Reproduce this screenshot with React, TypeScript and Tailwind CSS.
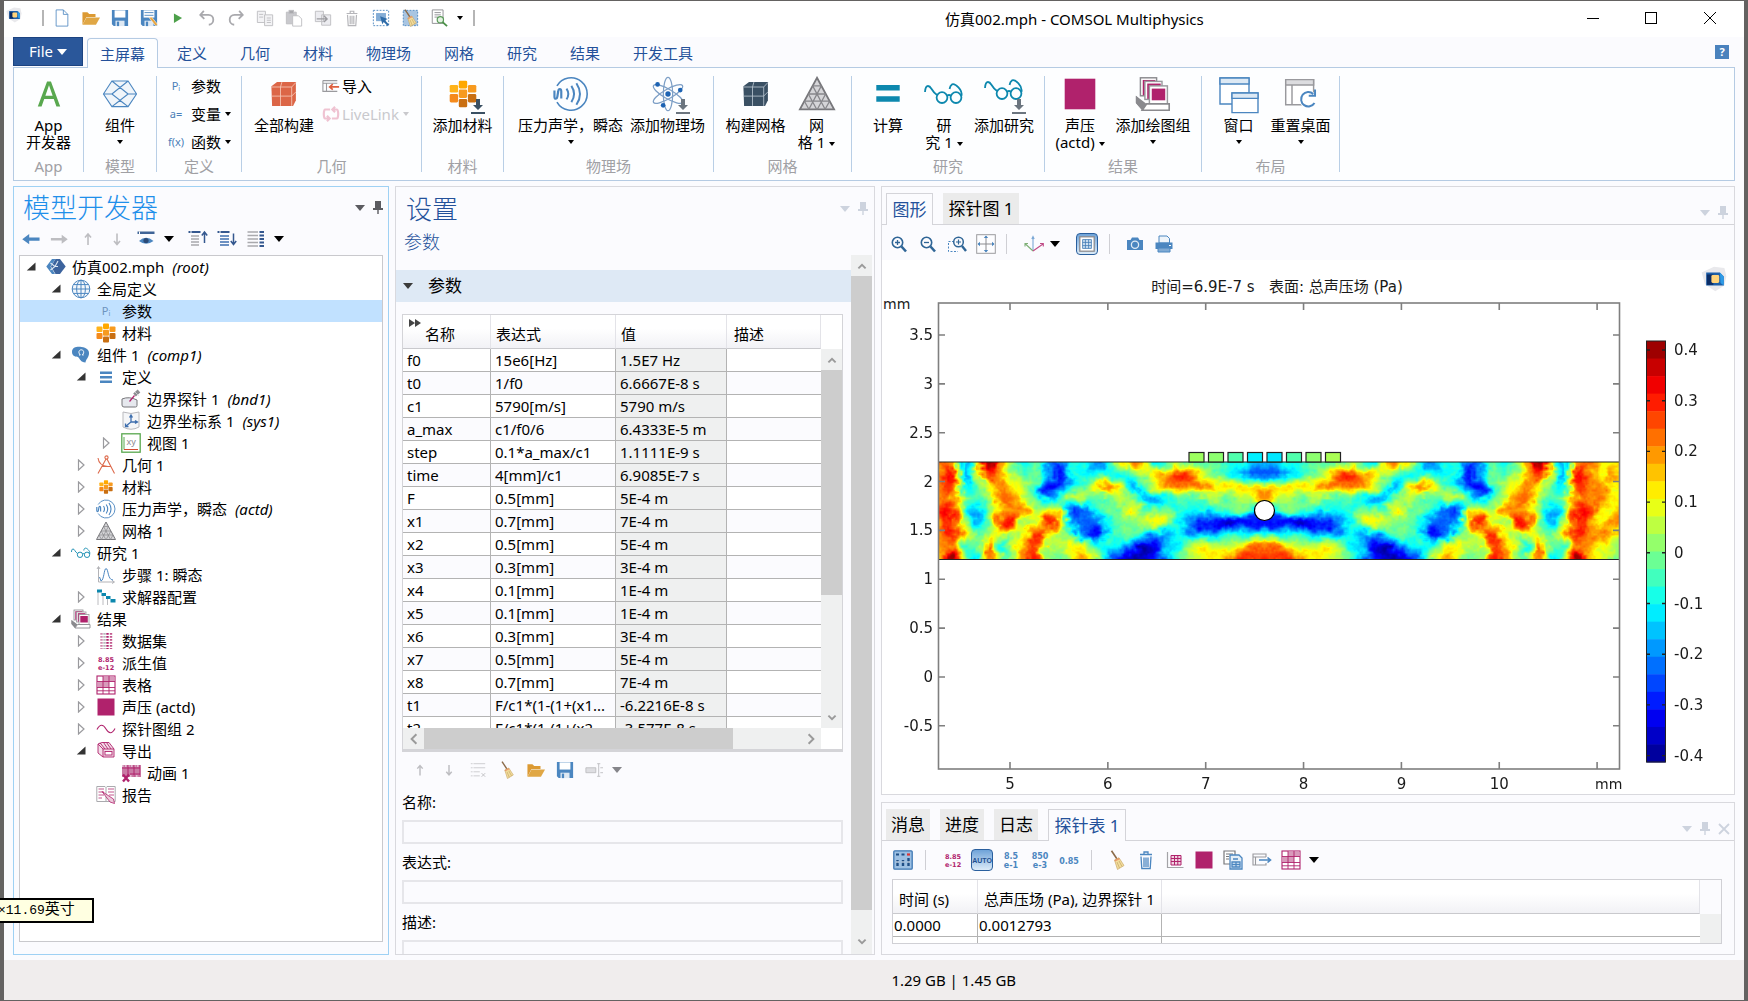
import React, { useEffect, useRef } from 'react';

const BLUE = '#4b86c0';
const GRAY = '#bdbdc1';
const PINK = '#b0226c';
const TEAL = '#0d88ae';
const SLATE = '#3a5063';

const cube = (fill: string, line: string) => (
  <>
    <path d="M1 4.5 L5 1.5 H18.5 V14.5 L16.5 18.5 H1.5 Z" fill={fill} />
    <path d="M1 5 H15.5 V18.5 M15.5 5 L18.5 1.8 M8.5 1.5 L7.5 5 V18.5 M1 11.5 H15.5 L18.5 8.5" fill="none" stroke={line} strokeWidth="0.6" />
  </>
);

const honeycomb = (
  <>
    <rect x="7" y="0.5" width="6" height="5.5" rx="1" fill="#ffa800" />
    <rect x="0.5" y="3.5" width="6" height="5.5" rx="1" fill="#ffb31a" />
    <rect x="13.5" y="3.5" width="6" height="5.5" rx="1" fill="#f79a1f" />
    <rect x="7" y="6.8" width="6" height="6" rx="1" fill="#f79a1f" />
    <rect x="0.5" y="10" width="6" height="6" rx="1" fill="#f58a1c" />
    <rect x="13.5" y="10" width="6" height="6" rx="1" fill="#c96f12" />
    <rect x="7" y="13.5" width="6" height="6" rx="1" fill="#c96f12" />
  </>
);

const acoustics = (
  <g fill="none" stroke={BLUE} strokeWidth="0.9">
    <path d="M2.2 5.5 A9 9 0 1 1 2.2 14.5" />
    <path d="M0.8 8 v3.5 c0 1.5 1.4 1.5 1.6 0 l.5-3 c.2-1.6 1.6-1.6 1.7 0 v4" strokeWidth="1.2" />
    <path d="M7.5 7 q2 3 0 6 M10.2 5.5 q3 4.5 0 9 M13 4 q4 6 0 12" strokeWidth="1.1" />
  </g>
);

const meshTriangle = (
  <>
    <path d="M10 1 L19.5 18.5 H0.5 Z" fill="#d5d5d8" stroke="#77777b" strokeWidth="1" />
    <path d="M7.6 5.5 H12.4 M5.2 10 H14.8 M3 14 H17 M7.6 5.5 L14.5 18.5 M12.4 5.5 L5.5 18.5 M5.2 10 L9.8 18.5 M14.8 10 L10.2 18.5 M3 14 L5.5 18.5 M17 14 L14.5 18.5" fill="none" stroke="#86868a" strokeWidth="0.7" />
  </>
);

const glasses = (
  <g fill="none" stroke={TEAL} strokeWidth="0.9">
    <circle cx="9" cy="11.8" r="2.7" />
    <circle cx="16" cy="11.8" r="2.7" />
    <path d="M11.5 11 q1-1 2 0 M6.5 10.5 C3.5 8.5 3.8 6 2 6 C0.8 6 0.6 7.5 0.5 9 M18.7 11 C19.5 8 15.5 4.5 14 5.2 C13 5.8 13 6.5 12.8 7.5" />
  </g>
);

const plotStack = (
  <>
    <path d="M0.5 11 L4 14.5 V19 L0.5 15 Z" fill="#8a8a8e" />
    <rect x="3" y="1" width="9" height="10" fill="#fff" stroke="#8a8a8e" strokeWidth="0.8" />
    <rect x="4.3" y="2.2" width="7" height="8.5" fill={PINK} />
    <rect x="5.5" y="3" width="9.5" height="10" fill="#fff" stroke="#9a9a9e" strokeWidth="0.8" />
    <rect x="6.8" y="4.2" width="7.5" height="8.5" fill={PINK} />
    <rect x="8" y="5.5" width="10" height="10" fill="#fff" stroke="#9a9a9e" strokeWidth="0.8" />
    <rect x="9.3" y="7" width="7.5" height="6.5" fill={PINK} />
    <path d="M0.5 11 L6.5 15.5 L4 19 L0.5 15 Z" fill="#8a8a8e" />
    <path d="M4 19 L6.5 15.5 H19 V19 Z" fill="#fff" stroke="#8a8a8e" strokeWidth="0.9" />
  </>
);

const broom = (
  <>
    <path d="M4.5 0.8 L10 9" stroke="#8b6b4a" strokeWidth="1.6" />
    <path d="M7.5 10 L12 7.8 L17 15.5 L10.5 19.5 Z" fill="#f3dd9c" stroke="#c9a868" strokeWidth="0.7" />
    <path d="M7.5 10 L12 7.8 L12.8 9.2 L8 11.4 Z" fill="#e79a6a" />
    <path d="M10 12 L12.5 18 M12 11 L15 16.5" stroke="#b89a5a" strokeWidth="0.6" />
  </>
);

const floppy = (
  <>
    <path d="M1 1 H19 V19 H3 L1 17 Z" fill={BLUE} />
    <rect x="4" y="1.5" width="12" height="8" fill="#fff" />
    <rect x="5" y="13" width="10" height="6" fill="#dfe9f3" />
    <rect x="6.5" y="14" width="2.5" height="5" fill={BLUE} />
  </>
);

const folder = (
  <>
    <path d="M0.5 17.5 V3.5 H6 L8 5.5 H15 V9 H5 Z" fill="#dc9a33" />
    <path d="M0.5 17.5 L5 9.5 H20 L15.5 17.5 Z" fill="#e0a745" />
  </>
);

const appLogo = (
  <>
    <path d="M10 0.5 L18 1.5 L19.5 8 L18 15 L11 19.5 L3 14 L0.5 5 Z" fill="#e9e9ec" />
    <path d="M4 5 H14.5 L17.5 8 V15 H4 Z" fill="#1d5fa8" />
    <rect x="4.5" y="6.5" width="5" height="8" fill="#0a2c66" />
    <rect x="8" y="7" width="6" height="6" rx="1" fill="#ffd37a" />
    <path d="M14.5 5 L17.5 8 V15 L15 13 Z" fill="#2e9be6" />
  </>
);

const tableGrid = (
  <>
    <rect x="1" y="1" width="18" height="18" fill="#fff" stroke={PINK} strokeWidth="1.1" />
    <rect x="7" y="1.5" width="6" height="11" fill="#d89abb" />
    <rect x="1.5" y="7" width="6" height="5.5" fill="#d89abb" />
    <rect x="13" y="1.5" width="5.5" height="5" fill="#d89abb" />
    <path d="M1 6.5 H19 M1 12.5 H19 M7 1 V19 M13 1 V19 M1 15.8 H19" stroke={PINK} strokeWidth="0.9" />
  </>
);

const icons: Record<string, React.ReactNode> = {
  logo: appLogo,
  newFile: <path d="M3.5 1 H11.5 L16.5 6 V19 H3.5 Z M11.5 1 V6 H16.5" fill="#fff" stroke={BLUE} strokeWidth="0.9" />,
  folder,
  floppy,
  saveAs: (
    <>
      {floppy}
      <path d="M5 4 H15 M5 7 H15" stroke={BLUE} />
      <path d="M10 9.5 L13 9 L19.5 17 L17.5 19 Z" fill="#eaa53c" stroke="#fff" strokeWidth="0.6" />
    </>
  ),
  run: <path d="M5.5 5 L14.5 10 L5.5 15.5 Z" fill="#4da04a" />,
  undo: <path d="M6.5 2 L2.5 6.5 L7 11 M3 6.5 H11.5 C19 6.5 18.5 17 12 17.5" fill="none" stroke="#a9a9ad" strokeWidth="2" />,
  redo: <path d="M13.5 2 L17.5 6.5 L13 11 M17 6.5 H8.5 C1 6.5 1.5 17 8 17.5" fill="none" stroke="#a9a9ad" strokeWidth="2" />,
  copy: (
    <g fill="#f3f3f5" stroke={GRAY}>
      <path d="M1.5 2.5 H10.5 V15 H1.5 Z M3.5 6 H8 M3.5 9 H8" />
      <path d="M9.5 6.5 H18.5 V18.5 H9.5 Z M12 10 H16.5 M12 12.5 H16.5 M12 15 H16.5" />
    </g>
  ),
  paste: (
    <g stroke={GRAY}>
      <path d="M1.5 3.5 H12.5 V16.5 H1.5 Z" fill="#c9c9cd" />
      <rect x="4.5" y="1.5" width="5" height="3.5" fill="#a9a9ad" />
      <path d="M8.5 7.5 H15 L18.5 11 V19 H8.5 Z" fill="#fff" />
    </g>
  ),
  duplicate: (
    <>
      <path d="M1.5 2.5 H10.5 V14 H1.5 Z M8.5 6.5 H18.5 V18 H8.5 Z" fill="#ececf0" stroke={GRAY} />
      <path d="M3 11 H14 M11 7.5 L14.5 11 L11 14.5" fill="none" stroke="#9c9ca0" strokeWidth="1.6" />
    </>
  ),
  trash: (
    <path d="M4 5 H16 M8 4.5 V2.5 H12 V4.5 M5 6.5 L5.8 18.5 H14.2 L15 6.5 M8 7.5 V17 M10 7.5 V17 M12 7.5 V17" fill="none" stroke="#b5b5b9" strokeWidth="1.3" />
  ),
  select: (
    <>
      <rect x="1.5" y="1.5" width="17" height="17" fill="none" stroke={BLUE} strokeDasharray="2 1.5" />
      <rect x="4.5" y="4.5" width="11" height="9" fill="#84add6" />
      <path d="M9 8 L17.5 11 L14.5 12.5 L19 17.5 L17.5 19 L13 14.5 L11.5 17 Z" fill="#2f6ca8" />
    </>
  ),
  clearSelection: (
    <>
      <rect x="2.5" y="1.5" width="16" height="17" fill="#a8c5e2" stroke={BLUE} strokeDasharray="2 1.5" />
      {broom}
    </>
  ),
  search: (
    <>
      <path d="M2.5 1 H14.5 V16 H2.5 Z M5 4 H12 M5 6.5 H12 M5 9 H9" fill="#fff" stroke="#8b8b8f" />
      <circle cx="11.5" cy="12" r="3.5" fill="#e3f1e2" stroke="#5a9a58" strokeWidth="1.3" />
      <path d="M14 14.5 L19 19" stroke="#4a9047" strokeWidth="2" />
    </>
  ),
  appA: <path d="M2 19 L8.6 1 H11.4 L18 19 H15.3 L13.4 13.5 H6.6 L4.7 19 Z M7.4 11.3 H12.6 L10 3.8 Z" fill="#59a84f" fillRule="evenodd" />,
  gem: (
    <path d="M0.8 10 L5.5 2.8 H14.5 L19.2 10 L14.5 17 H5.5 Z M5.5 2.8 L10 6.4 M14.5 2.8 L10 6.4 M0.8 10 H5.5 M14.5 10 H19.2 M5.5 17 L10 13.6 L14.5 17 M5.5 2.8 L14.5 10 M14.5 2.8 L5.5 10 M5.5 10 L14.5 17 M14.5 10 L5.5 17" fill="#f0f5fa" stroke={BLUE} strokeWidth="0.6" />
  ),
  cubeRed: cube('#dc6647', '#f5c8b8'),
  cubeDark: cube(SLATE, '#b8c4ce'),
  importGeom: (
    <>
      <path d="M1 4 H17 M1 4 V16 H17 M1 7 H17 M5 7 V16" fill="none" stroke="#9a9a9e" strokeWidth="1.2" />
      <path d="M19 11 H9 M12 8 L8.5 11 L12 14" fill="none" stroke="#dd5f3e" strokeWidth="1.8" />
    </>
  ),
  livelink: (
    <path d="M9 5 H3.5 C1.5 5 1.5 15 3.5 15 H7 M5.5 12 L8.5 15 L5.5 18 M11 15 H16.5 C18.5 15 18.5 5 16.5 5 H13 M14.5 2 L11.5 5 L14.5 8" fill="none" stroke="#efc3d2" strokeWidth="2.4" />
  ),
  honeycomb,
  acoustics,
  atom: (
    <g fill="none" stroke="#7d9fc6" strokeWidth="0.7">
      <ellipse cx="10" cy="10" rx="2.6" ry="9.3" />
      <ellipse cx="10" cy="10" rx="2.6" ry="9.3" transform="rotate(60 10 10)" />
      <ellipse cx="10" cy="10" rx="2.6" ry="9.3" transform="rotate(-60 10 10)" />
      <g fill="#1d63b3" stroke="none">
        <circle cx="10" cy="10" r="1.5" />
        <circle cx="4.2" cy="4.7" r="1.3" />
        <circle cx="16.8" cy="7.8" r="1.3" />
        <circle cx="7.3" cy="16.3" r="1.3" />
      </g>
    </g>
  ),
  mesh: meshTriangle,
  equals: <path d="M3.5 5 H16.5 V8 H3.5 Z M3.5 11.3 H16.5 V14.3 H3.5 Z" fill={TEAL} />,
  glasses,
  pinkSquare: <rect x="1.5" y="1.5" width="17" height="17" fill={PINK} />,
  plotStack,
  windows: (
    <g fill="#fff" stroke={BLUE} strokeWidth="0.7">
      <path d="M0.5 2 H15 V15 H0.5 Z" />
      <path d="M0.5 2 H15 V5 H0.5 Z" fill="#dde9f4" />
      <path d="M6.5 9.5 H19.5 V19.3 H6.5 Z" />
      <path d="M6.5 9.5 H19.5 V12.2 H6.5 Z" fill="#dde9f4" />
    </g>
  ),
  resetDesktop: (
    <>
      <path d="M1.5 2 H17 V16 H1.5 Z" fill="#fff" stroke="#99999d" strokeWidth="0.8" />
      <path d="M1.5 2 H17 V5 H1.5 Z M5 5 V16" fill="#dcdcdf" stroke="#99999d" strokeWidth="0.8" />
      <circle cx="14" cy="13" r="5" fill="#fff" />
      <path d="M17.5 15 A4 4 0 1 1 16.8 10 M17.8 7.5 V11 H14.3" fill="none" stroke={BLUE} strokeWidth="1.1" />
    </>
  ),
  arrowLeft: <path d="M19.5 8.3 V12 H8 V15.8 L0.3 10.2 L8 4.5 V8.3 Z" fill={BLUE} />,
  arrowRight: <path d="M1 8.8 V11.6 H13 V15.2 L19.7 10.2 L13 5.2 V8.8 Z" fill={GRAY} />,
  arrowUp: <path d="M10 16 V5 M7 8.5 L10 5 L13 8.5" fill="none" stroke={GRAY} strokeWidth="1.6" />,
  arrowDown: <path d="M10 4.5 V15.5 M7 12 L10 15.5 L13 12" fill="none" stroke={GRAY} strokeWidth="1.6" />,
  eye: (
    <>
      <path d="M1.5 2.5 H18.5 V5 H1.5 Z" fill="#3f6497" />
      <path d="M3.5 2.5 V5" stroke="#fff" />
      <path d="M3 12 Q10 5.5 17.5 12 Q10 17.5 3 12 Z" fill={BLUE} />
      <circle cx="10" cy="11.5" r="2.6" fill="#2b4a76" />
    </>
  ),
  collapse: (
    <>
      <path d="M0.5 3 H12.5" stroke="#35588f" strokeWidth="2" strokeDasharray="2 1 9 0" />
      <path d="M3 7 H11 M3 10 H11 M3 13 H11 M3 16 H11" stroke="#a9a9ad" strokeWidth="1.4" />
      <path d="M16.5 14 V3.5 M13.8 6.5 L16.5 3 L19.2 6.5" fill="none" stroke="#35588f" strokeWidth="1.5" />
    </>
  ),
  expand: (
    <>
      <path d="M0.5 3 H12.5" stroke="#35588f" strokeWidth="2" strokeDasharray="2 1 9 0" />
      <path d="M3 7 H12 M3 10 H12 M3 13 H12 M3 16 H12" stroke="#3f6fae" strokeWidth="1.6" />
      <path d="M16.5 4.5 V15 M13.8 12 L16.5 15.5 L19.2 12" fill="none" stroke="#35588f" strokeWidth="1.5" />
    </>
  ),
  columns: (
    <>
      <path d="M1.5 3 H12 M1.5 6.5 H12 M1.5 10 H12 M1.5 13.5 H12 M1.5 17 H12" stroke="#a9a9ad" strokeWidth="1.5" />
      <path d="M13.5 3 H18 M13.5 6.5 H18 M13.5 10 H18 M13.5 13.5 H18 M13.5 17 H18" stroke="#35588f" strokeWidth="2" />
    </>
  ),
  root: (
    <>
      <path d="M0.3 9.5 L6 2 H9.5 L4.5 9.5 L9 17 H6 Z" fill={BLUE} />
      <path d="M9.5 2 H14 L19.7 9.5 L14 17 H9.5 L5 9.5 Z" fill="#3c639d" />
      <path d="M4.5 6 L9 9.5 L4.5 13 M9 9.5 H12 M9 9.5 L12 4" fill="none" stroke="#dce7f3" strokeWidth="1.1" />
    </>
  ),
  globe: (
    <g fill="none" stroke={BLUE} strokeWidth="1">
      <circle cx="10" cy="10" r="8.8" fill="#f4f8fc" />
      <ellipse cx="10" cy="10" rx="4.4" ry="8.8" />
      <path d="M10 1.2 V18.8 M1.2 10 H18.8 M2.5 5.6 H17.5 M2.5 14.4 H17.5" />
    </g>
  ),
  component: (
    <>
      <path d="M1 7 C1 2 6 1.5 10.5 2 C15.5 2.5 18.5 5 18 9 C17.5 13 15 14 14.5 17.5 C9.5 17.5 9 13.5 7 12 C5 11.5 1 11.5 1 7 Z" fill={BLUE} />
      <path d="M8 10 H9.3 C6.8 7.5 8 4.8 10.3 4.8 C12.6 4.8 13.8 7.5 11.3 10 H12.6" fill="none" stroke="#fff" />
    </>
  ),
  definitions: <path d="M4 4.5 H16 V7 H4 Z M4 9 H16 V11.5 H4 Z M4 13.5 H16 V16 H4 Z" fill={BLUE} />,
  probe: (
    <>
      <path d="M1 10 Q8 7 16 11 V16.5 Q16 18 14.5 18 H3 Q1 18 1 16 Z" fill="#e6e8ee" stroke="#77777b" />
      <path d="M13.5 6 L18 2" stroke="#8d8d91" strokeWidth="4" />
      <path d="M14 3 L17.5 6.5" stroke="#c9c9cd" />
      <path d="M8.5 12.5 L13.5 6.5" stroke={PINK} strokeWidth="1.2" />
    </>
  ),
  coordSystem: (
    <>
      <path d="M2 1 Q10 4 18 1 V16 Q10 20.5 2 16 Z" fill="#f5f6f8" stroke="#b9b9bd" />
      <path d="M10 4.5 V11 L5 15 M10 11 H16 M8.5 6.5 L10 4 L11.5 6.5 M14 9.5 L16.5 11 L14 12.5 M4.5 12.5 V15.5 H7.5" fill="none" stroke="#3f6fae" strokeWidth="1.3" />
    </>
  ),
  view: (
    <>
      <rect x="0.8" y="0.8" width="18.4" height="18.4" fill="#fff" stroke="#59a84f" strokeWidth="1.3" />
      <path d="M3 4 V16.5" stroke="#59a84f" />
      <path d="M3 16.5 H17" stroke="#d3482f" />
      <text x="5.5" y="11.5" fontSize="9" fontFamily="Noto Sans" fill="#8b8b8f">xy</text>
    </>
  ),
  geometry: (
    <g fill="none" stroke="#dd6a4c" strokeWidth="1.1">
      <path d="M2 3 Q3 11 12 11.5 M10 4 L2 18.5 M11 4 L18.5 18.5 M5.5 11.5 H14.5" />
      <circle cx="10.5" cy="2.5" r="1.6" />
    </g>
  ),
  honeycombSmall: <g transform="translate(3 3) scale(0.7)">{honeycomb}</g>,
  step: (
    <>
      <path d="M2.5 2 V17 H18 M1 4 L2.5 1.5 L4 4 M16 15.5 L18.5 17 L16 18.5" fill="none" stroke="#b3b3b7" />
      <path d="M3.5 12 L5 16 C8 15.5 8 3.5 10 3.5 C12.5 3.5 11.5 15 17 15" fill="none" stroke={BLUE} />
    </>
  ),
  solver: (
    <>
      <path d="M2 5 V18 M7 8.5 V18 M11.5 12 V18" stroke="#bcbcc0" />
      <path d="M1 2.5 H6 V5.5 H1 Z M5.5 6 H10 V9 H5.5 Z M10 9 H14.5 V12 H10 Z M14.5 12 H19.5 V15.5 H14.5 Z" fill={TEAL} />
    </>
  ),
  datasets: (
    <g fill="none" strokeWidth="2.4" strokeDasharray="1.8 1.2">
      <path d="M5.5 2 V18" stroke="#d089ae" />
      <path d="M8.5 2 V18" stroke="#b9b9bd" />
      <path d="M11.5 2 V18" stroke={PINK} />
      <path d="M15 2 V18" stroke="#c2588e" />
    </g>
  ),
  derived: (
    <g fill={PINK} fontFamily="DejaVu Sans" fontWeight="bold" fontSize="6.5">
      <text x="2" y="9">8.85</text>
      <text x="2" y="16.5">e-12</text>
    </g>
  ),
  table: tableGrid,
  wave: <path d="M1 10.5 C4 5 7 5 10 10 C13 15 16 15 19 9.5" fill="none" stroke={PINK} strokeWidth="1.1" />,
  exportIcon: (
    <g fill="#f3dce8" stroke={PINK} strokeWidth="0.9">
      <path d="M2 3 L6 1.5 H13 L18 8 V16 H7 L2 12 Z" />
      <path d="M2 3 L7 8 H18 M4 1.8 L9 8 M7.5 1.5 L12 8 M10.5 1.5 L15 8 M7 8 V16" fill="none" />
      <rect x="9" y="10.5" width="7" height="3.5" fill="#fff" />
    </g>
  ),
  animation: (
    <>
      <path d="M1 2 H19.5 V14 H1 Z" fill="#c97ba5" />
      <path d="M1 3 H19.5 M9 13 H19.5" stroke="#fff" strokeDasharray="1.5 1.5" />
      <path d="M7 2 V14 M13 2 V14 M19 2 V14 M1 5 H19 M9 11 H19" stroke={PINK} />
      <path d="M2 11.5 L8 18.5 M8 11.5 L2 18.5" stroke={PINK} strokeWidth="2.4" />
    </>
  ),
  report: (
    <>
      <path d="M0.8 1.5 H9 L10 2.5 L11 1.5 H19.2 V16.5 H0.8 Z M10 2.5 V16.5" fill="#fff" stroke="#aaaaae" />
      <path d="M2.5 4 H8 M2.5 7 H8 M2.5 10 H8 M2.5 13 H6 M12 4 H18 M12 7 H18 M13 10 H18" stroke="#c2588e" />
      <path d="M6 6.5 L14 17 L18.5 18.5 L17.5 14 Z" fill="#eccadb" stroke={PINK} strokeWidth="0.8" />
    </>
  ),
  deleteRow: (
    <>
      <path d="M2 3 H18 M2 7.5 H18 M2 12 H12 M2 16.5 H12" stroke="#c9c9cd" strokeDasharray="2 1 14 0" />
      <path d="M14 13.5 L18 17.5 M18 13.5 L14 17.5" stroke={GRAY} />
    </>
  ),
  broom,
  rename: (
    <>
      <path d="M1 7.5 H12 V13 H1 Z" fill="#dedee2" stroke={GRAY} />
      <path d="M13.5 3 H17 M15.2 3 V17 M13.5 17 H17 M17 7.5 H20 M17 13 H20" stroke={GRAY} fill="none" />
    </>
  ),
  zoomIn: (
    <g fill="none" stroke="#2f6596">
      <circle cx="8.5" cy="8.5" r="5.2" strokeWidth="1.6" />
      <path d="M12.5 12.5 L17 17.5" strokeWidth="2.6" />
      <path d="M6 8.5 H11 M8.5 6 V11" strokeWidth="1.3" />
    </g>
  ),
  zoomOut: (
    <g fill="none" stroke="#2f6596">
      <circle cx="8.5" cy="8.5" r="5.2" strokeWidth="1.6" />
      <path d="M12.5 12.5 L17 17.5" strokeWidth="2.6" />
      <path d="M6 8.5 H11" strokeWidth="1.3" />
    </g>
  ),
  zoomBox: (
    <g fill="none" stroke="#2f6596">
      <path d="M7 7.5 H1.5 V17.5 H11" stroke={BLUE} strokeDasharray="2 1.5" />
      <circle cx="11.5" cy="8" r="4.8" strokeWidth="1.5" />
      <path d="M15 12 L19 17" strokeWidth="2.4" />
      <path d="M9 8 H14 M11.5 5.5 V10.5" strokeWidth="1.2" />
    </g>
  ),
  zoomExtents: (
    <>
      <rect x="0.7" y="0.7" width="18.6" height="18.6" fill="#fdfdff" stroke="#9b9b9f" />
      <path d="M10 2 V18 M2 10 H18" stroke="#8b8b8f" />
      <path d="M10 1.5 L12.2 4 H7.8 Z M10 18.5 L12.2 16 H7.8 Z M1.5 10 L4 7.8 V12.2 Z M18.5 10 L16 7.8 V12.2 Z" fill={BLUE} />
    </>
  ),
  axes: (
    <g fill="none" strokeWidth="1.1">
      <path d="M9 17 V3 M7.8 5 L9 2.5 L10.2 5" stroke="#7da9d6" />
      <path d="M9 17 L1.5 10 M1 12.5 V9.5 H4" stroke="#7fb077" />
      <path d="M9 17 L19 10 M16 9.5 H19.3 V12.5" stroke="#c04a86" />
    </g>
  ),
  gridToggle: (
    <g transform="translate(2 2) scale(0.8)">
      <rect x="1" y="1" width="18" height="18" fill="#fff" stroke="#8b8b8f" strokeWidth="1.6" />
      <path d="M4.5 4.5 H15.5 V15.5 H4.5 Z M8 4.5 V15.5 M12 4.5 V15.5 M4.5 8 H15.5 M4.5 12 H15.5" fill="#cfe1f2" stroke="#3f78b4" />
    </g>
  ),
  camera: (
    <>
      <path d="M2 6 H5.5 L7 3.5 H13 L14.5 6 H18 V16 H2 Z" fill={BLUE} />
      <circle cx="10" cy="10.8" r="3.6" fill={BLUE} stroke="#dfeaf5" strokeWidth="1.3" />
    </>
  ),
  printer: (
    <>
      <path d="M5 2 H13 L15.5 4.5 V9 H5 Z" fill="#eef4fa" stroke={BLUE} />
      <path d="M1.5 8.5 H18.5 V15 H1.5 Z" fill={BLUE} />
      <path d="M4 14 H16 V18 H4 Z" fill="#7fa9d3" stroke={BLUE} />
      <path d="M15 11.5 H17" stroke="#fff" />
    </>
  ),
  precision: (
    <>
      <rect x="0.8" y="0.8" width="18.4" height="18.4" rx="1" fill="#9dc0e3" stroke="#3f78b4" strokeWidth="1.3" />
      <path d="M4.5 10 V16 M10 10 V16 M15.5 8 V16" stroke="#1f4f86" strokeWidth="2.4" />
      <path d="M3 4.5 H6 M8.5 4.5 H11.5" stroke="#1f4f86" strokeWidth="2" />
      <path d="M14 4.5 H17" stroke="#d33" strokeWidth="2.2" />
      <path d="M3 12 H6 M8.5 12 H11.5 M14 12 H17" stroke="#fff" />
    </>
  ),
  auto: <text x="10" y="13" textAnchor="middle" fontFamily="Liberation Sans" fontWeight="bold" fontSize="7" fill="#1d4f8f">AUTO</text>,
  eng1: (
    <g fill={BLUE} fontFamily="DejaVu Sans" fontWeight="bold" fontSize="8" textAnchor="middle">
      <text x="10" y="8.5">8.5</text>
      <text x="10" y="17.5">e-1</text>
    </g>
  ),
  eng2: (
    <g fill={BLUE} fontFamily="DejaVu Sans" fontWeight="bold" fontSize="8" textAnchor="middle">
      <text x="10" y="8.5">850</text>
      <text x="10" y="17.5">e-3</text>
    </g>
  ),
  decimal: <text x="10" y="13.5" textAnchor="middle" fill={BLUE} fontFamily="DejaVu Sans" fontWeight="bold" fontSize="8">0.85</text>,
  trashBlue: (
    <path d="M4 4.5 H16 M8 4 V2 H12 V4 M5 6.5 L5.8 18.5 H14.2 L15 6.5 M8 7.5 V17 M10 7.5 V17 M12 7.5 V17" fill="none" stroke={BLUE} strokeWidth="1.3" />
  ),
  tableGraph: (
    <>
      <path d="M2.5 2 V17.5 H18.5" fill="none" stroke="#a3a3a7" strokeWidth="1.2" />
      <path d="M6 5.5 H16 V15 H6 Z M9.5 5.5 V15 M12.8 5.5 V15 M6 8.5 H16 M6 11.5 H16" fill="#f0d3e1" stroke={PINK} />
    </>
  ),
  copyTable: (
    <>
      <path d="M1 1 H12 V14 H1 Z M3 4 H10 M3 6.5 H6 M3 9 H6" fill="#fff" stroke="#77777b" strokeWidth="1.2" />
      <path d="M7 5 H16 L19 8 V19 H7 Z M10 9 H15 M9 12 H17 V17 H9 Z M13 12 V17 M9 14.5 H17" fill="#e5eff8" stroke={BLUE} strokeWidth="1.3" />
    </>
  ),
  exportTable: (
    <>
      <path d="M14 7 V4 H1 V15 H14 V13 M1 7 H14 M3.5 7 V15" fill="none" stroke="#99999d" strokeWidth="1.1" />
      <path d="M7 10 H18 M15.5 7.5 L18.5 10 L15.5 12.5" fill="none" stroke={BLUE} strokeWidth="1.6" />
    </>
  ),
};

const Icon = ({ name, className = 'h-5 w-5' }: { name: string; className?: string }) => (
  <svg viewBox="0 0 20 20" aria-hidden="true" className={`shrink-0 ${className}`}>{icons[name]}</svg>
);

const Caret = ({ className = 'border-t-black' }: { className?: string }) => (
  <span className={`inline-block h-0 w-0 shrink-0 border-x-5 border-t-6 border-x-transparent ${className}`} />
);

const SmallCaret = ({ className = 'border-t-black' }: { className?: string }) => (
  <span className={`inline-block h-0 w-0 shrink-0 border-x-3 border-t-4 border-x-transparent align-middle ${className}`} />
);

const Pin = () => (
  <svg viewBox="0 0 10 14" aria-hidden="true" className="h-3.5 w-2.5">
    <path d="M2 0 H8 V7 H10 V9 H5.7 V13 H4.3 V9 H0 V7 H2 Z" fill="currentColor" />
  </svg>
);

const Chevron = ({ dir }: { dir: 'up' | 'down' | 'left' | 'right' }) => {
  const paths = { up: 'M2 7 L5 4 L8 7', down: 'M2 3 L5 6 L8 3', left: 'M7 1 L3 5 L7 9', right: 'M3 1 L7 5 L3 9' };
  return (
    <svg viewBox="0 0 10 10" aria-hidden="true" className="h-3 w-3 shrink-0">
      <path d={paths[dir]} fill="none" stroke="#9a9a9a" strokeWidth="1.6" />
    </svg>
  );
};

/* ---------- title bar and ribbon ---------- */

const quickTools = [
  ['新建', 'newFile'], ['打开', 'folder'], ['保存', 'floppy'], ['另存为', 'saveAs'], ['运行', 'run'],
  ['撤消', 'undo'], ['重做', 'redo'], ['复制', 'copy'], ['粘贴', 'paste'], ['复制副本', 'duplicate'],
  ['删除', 'trash'], ['选择', 'select'], ['清除选择', 'clearSelection'], ['查找', 'search'],
];

const TitleBar = () => (
  <header className="flex h-9 shrink-0 items-center bg-white pb-0.5">
    <Icon name="logo" className="mb-1.5 ml-0.5 h-4 w-4" />
    <span className="mr-[3px] ml-5 h-4 w-0.5 bg-[#b5b5b5]" />
    {quickTools.map(([label, icon]) => (
      <button key={label} aria-label={label} className="flex w-[29px] shrink-0 justify-center">
        <Icon name={icon} className="h-4.5 w-4.5" />
      </button>
    ))}
    <button aria-label="更多" className="ml-1 flex"><SmallCaret /></button>
    <span className="ml-2.5 h-4 w-0.5 bg-[#b5b5b5]" />
    <h1 className="ml-[470px] pt-0.5 text-[15px] whitespace-nowrap">仿真002.mph - COMSOL Multiphysics</h1>
    <div className="mr-1 ml-auto flex">
      <button aria-label="最小化" className="flex h-8 w-[58px] items-center justify-center"><span className="h-px w-3 bg-black" /></button>
      <button aria-label="最大化" className="flex h-8 w-[58px] items-center justify-center"><span className="h-3 w-3 border border-black" /></button>
      <button aria-label="关闭" className="flex h-8 w-[60px] items-center justify-center">
        <svg viewBox="0 0 12 12" className="h-3 w-3"><path d="M0 0 L12 12 M12 0 L0 12" stroke="#000" /></svg>
      </button>
    </div>
  </header>
);

const ribbonTabs = ['定义', '几何', '材料', '物理场', '网格', '研究', '结果', '开发工具'];

const RibbonTabs = () => (
  <nav className="flex h-[30px] shrink-0 items-end px-[9px] text-[15px] text-[#24519a]">
    <button className="flex h-[29px] w-[70px] items-center justify-center gap-1 self-start border border-[#1c4380] bg-[#2a579a] text-white">
      File<Caret className="border-t-white" />
    </button>
    <button className="relative z-10 -mb-px ml-1 h-[30px] w-[71px] rounded-t border border-b-0 border-[#b5cbe3] bg-[#fdfeff] pt-0.5">主屏幕</button>
    <div className="ml-[19px] flex gap-[33px]">
      {ribbonTabs.map((t) => <button key={t} className="h-[27px]">{t}</button>)}
    </div>
    <button aria-label="帮助" className="mr-1.5 mb-2 ml-auto h-3.5 w-3.5 bg-[#4a82bd] text-[11px] leading-[14px] font-bold text-white">?</button>
  </nav>
);

const Group = ({ label, width, children }: { label: string; width: string; children: React.ReactNode }) => (
  <section className={`my-2 flex shrink-0 flex-col border-r border-[#b9cfe6] ${width}`}>
    <div className="flex h-20 justify-center">{children}</div>
    <h2 className="h-3.5 text-center leading-5 text-[#a0a0a4]">{label}</h2>
  </section>
);

type BigProps = { icon: string; width?: string; lines: string[]; caret?: 'below' | 'inline'; add?: string; size?: string };

const BigButton = ({ icon, width = 'w-full', lines, caret, add, size = 'h-8 w-8' }: BigProps) => (
  <button className={`flex shrink-0 flex-col items-center leading-[17px] whitespace-nowrap ${width}`}>
    <span className="relative mb-[5px] flex h-9 w-full items-center justify-center">
      <Icon name={icon} className={size} />
      {add && (
        <svg viewBox="0 0 14 16" className={`absolute top-[23px] left-1/2 ml-2 h-4 w-3.5 ${add}`}>
          <path d="M5 0 H9 V6 H12 L7 11 L2 6 H5 Z M0 13 H14 V15 H0 Z" fill="currentColor" />
        </svg>
      )}
    </span>
    {lines.map((l, i) => (
      <span key={l}>
        {l}
        {caret === 'inline' && i === lines.length - 1 && <> <SmallCaret /></>}
      </span>
    ))}
    {caret === 'below' && <SmallCaret className="mt-1.5 border-t-black" />}
  </button>
);

const SmallButton = ({ mark, text, caret }: { mark: string; text: string; caret?: boolean }) => (
  <button className="flex h-5 items-center">
    <span className="w-[22px] text-center text-[11px] text-[#4b7fb8]">{mark}</span>
    <span className="ml-1">{text}</span>
    {caret && <SmallCaret className="ml-1 border-t-black" />}
  </button>
);

const Ribbon = () => (
  <div className="mx-[9px] flex h-[114px] shrink-0 overflow-hidden border border-[#b5cbe3] bg-[#fdfeff]">
    <Group label="App" width="w-[70px]"><BigButton icon="appA" size="h-7 w-7" lines={['App', '开发器']} /></Group>
    <Group label="模型" width="w-[73px]"><BigButton icon="gem" size="h-9 w-9" lines={['组件']} caret="below" /></Group>
    <Group label="定义" width="w-[85px]">
      <div className="flex flex-col gap-2 pr-0.5">
        <SmallButton mark="Pᵢ" text="参数" />
        <SmallButton mark="a=" text="变量" caret />
        <SmallButton mark="f(x)" text="函数" caret />
      </div>
    </Group>
    <Group label="几何" width="w-[180px]">
      <BigButton icon="cubeRed" width="w-[76px]" size="h-7 w-7" lines={['全部构建']} />
      <div className="flex flex-col gap-2 pr-2">
        <button className="flex h-5 items-center gap-0.5"><Icon name="importGeom" className="h-[18px] w-[18px]" />导入</button>
        <button disabled className="flex h-5 items-center gap-0.5 text-[#c9c9cd]">
          <Icon name="livelink" className="h-[18px] w-[18px]" />LiveLink
          <SmallCaret className="ml-0.5 border-t-[#c9c9cd]" />
        </button>
      </div>
    </Group>
    <Group label="材料" width="w-[82px]"><BigButton icon="honeycomb" size="h-7 w-7" lines={['添加材料']} add="text-[#3a5063]" /></Group>
    <Group label="物理场" width="w-[210px]">
      <BigButton icon="acoustics" width="w-[118px]" size="h-9 w-9" lines={['压力声学，瞬态']} caret="below" />
      <BigButton icon="atom" width="w-[76px]" size="h-9 w-9" lines={['添加物理场']} add="text-[#6b757f]" />
    </Group>
    <Group label="网格" width="w-[138px]">
      <BigButton icon="cubeDark" width="w-[84px]" size="h-7 w-7" lines={['构建网格']} />
      <BigButton icon="mesh" width="mr-4 w-[38px]" size="h-9 w-10" lines={['网', '格 1']} caret="inline" />
    </Group>
    <Group label="研究" width="w-[193px]">
      <BigButton icon="equals" width="w-[72px]" size="h-9 w-9" lines={['计算']} />
      <BigButton icon="glasses" width="w-10" size="h-10 w-10" lines={['研', '究 1']} caret="inline" />
      <BigButton icon="glasses" width="w-20" size="h-10 w-10 -mt-2" lines={['添加研究']} add="text-[#6b757f]" />
    </Group>
    <Group label="结果" width="w-[157px]">
      <BigButton icon="pinkSquare" width="w-[68px]" size="h-9 w-9" lines={['声压', '(actd)']} caret="inline" />
      <BigButton icon="plotStack" width="mr-2 w-[78px]" size="h-9 w-9" lines={['添加绘图组']} caret="below" />
    </Group>
    <Group label="布局" width="w-[138px]">
      <BigButton icon="windows" width="w-[60px]" size="h-10 w-10" lines={['窗口']} caret="below" />
      <BigButton icon="resetDesktop" width="w-[64px]" size="h-9 w-9" lines={['重置桌面']} caret="below" />
    </Group>
  </div>
);

/* ---------- model builder ---------- */

type Node = { level: number; icon: string; text: string; tag?: string; open?: boolean; selected?: boolean };

const tree: Node[] = [
  { level: 0, icon: 'root', text: '仿真002.mph', tag: '(root)', open: true },
  { level: 1, icon: 'globe', text: '全局定义', open: true },
  { level: 2, icon: 'pi', text: '参数', selected: true },
  { level: 2, icon: 'honeycomb', text: '材料' },
  { level: 1, icon: 'component', text: '组件 1', tag: '(comp1)', open: true },
  { level: 2, icon: 'definitions', text: '定义', open: true },
  { level: 3, icon: 'probe', text: '边界探针 1', tag: '(bnd1)' },
  { level: 3, icon: 'coordSystem', text: '边界坐标系 1', tag: '(sys1)' },
  { level: 3, icon: 'view', text: '视图 1', open: false },
  { level: 2, icon: 'geometry', text: '几何 1', open: false },
  { level: 2, icon: 'honeycombSmall', text: '材料', open: false },
  { level: 2, icon: 'acoustics', text: '压力声学，瞬态', tag: '(actd)', open: false },
  { level: 2, icon: 'mesh', text: '网格 1', open: false },
  { level: 1, icon: 'glasses', text: '研究 1', open: true },
  { level: 2, icon: 'step', text: '步骤 1: 瞬态' },
  { level: 2, icon: 'solver', text: '求解器配置', open: false },
  { level: 1, icon: 'plotStack', text: '结果', open: true },
  { level: 2, icon: 'datasets', text: '数据集', open: false },
  { level: 2, icon: 'derived', text: '派生值', open: false },
  { level: 2, icon: 'table', text: '表格', open: false },
  { level: 2, icon: 'pinkSquare', text: '声压 (actd)', open: false },
  { level: 2, icon: 'wave', text: '探针图组 2', open: false },
  { level: 2, icon: 'exportIcon', text: '导出', open: true },
  { level: 3, icon: 'animation', text: '动画 1' },
  { level: 2, icon: 'report', text: '报告' },
];

const indents = ['pl-1.5', 'pl-[31px]', 'pl-14', 'pl-[81px]'];

const TreeRow = ({ node }: { node: Node }) => (
  <li role="treeitem" aria-expanded={node.open} className={`flex h-[22px] items-center whitespace-nowrap ${indents[node.level]} ${node.selected ? 'bg-[#c1e1ff]' : ''}`}>
    <svg viewBox="0 0 10 12" aria-hidden="true" className="mr-2.5 h-3 w-2.5 shrink-0">
      {node.open === true && <path d="M9.5 1.5 V9.5 H0.8 Z" fill="#333" />}
      {node.open === false && <path d="M2.5 1 L8 6 L2.5 11 Z" fill="#fff" stroke="#9a9a9e" strokeWidth="1.2" />}
    </svg>
    {node.icon === 'pi' ? <span className="w-5 text-center text-[11px] text-[#6d93bd]">Pᵢ</span> : <Icon name={node.icon} />}
    <span className="ml-1.5">{node.text}</span>
    {node.tag && <em className="ml-2">{node.tag}</em>}
  </li>
);

const ModelBuilder = () => (
  <aside className="flex w-[376px] shrink-0 flex-col border border-[#9fd1f4] bg-[#fbfbfe] px-[5px] pb-3">
    <div className="flex h-[42px] items-center justify-between pl-1">
      <h2 className="text-[27px] leading-8 font-light text-[#1f8fea]">模型开发器</h2>
      <div className="flex items-center gap-2 text-[#5b5b60]"><Caret className="border-t-[#5b5b60]" /><Pin /></div>
    </div>
    <div className="mb-[7px] flex h-[19px] items-center">
      <button aria-label="后退" className="ml-[3px]"><Icon name="arrowLeft" className="h-[18px] w-[18px]" /></button>
      <button aria-label="前进" className="ml-[10px]"><Icon name="arrowRight" className="h-[18px] w-[18px]" /></button>
      <button aria-label="上移" className="ml-[10px]"><Icon name="arrowUp" /></button>
      <button aria-label="下移" className="ml-[9px]"><Icon name="arrowDown" /></button>
      <button aria-label="显示" className="ml-[9px] flex items-center gap-2"><Icon name="eye" /><Caret /></button>
      <button aria-label="折叠" className="ml-3.5"><Icon name="collapse" /></button>
      <button aria-label="展开" className="ml-[9px]"><Icon name="expand" /></button>
      <button aria-label="节点文本" className="ml-[9px] flex items-center gap-2"><Icon name="columns" /><Caret /></button>
    </div>
    <ul role="tree" className="flex-1 overflow-hidden border border-[#c9c9cd] bg-white">
      {tree.map((n, i) => <TreeRow key={i} node={n} />)}
    </ul>
  </aside>
);

/* ---------- settings ---------- */

const params = [
  ['f0', '15e6[Hz]', '1.5E7 Hz'],
  ['t0', '1/f0', '6.6667E-8 s'],
  ['c1', '5790[m/s]', '5790 m/s'],
  ['a_max', 'c1/f0/6', '6.4333E-5 m'],
  ['step', '0.1*a_max/c1', '1.1111E-9 s'],
  ['time', '4[mm]/c1', '6.9085E-7 s'],
  ['F', '0.5[mm]', '5E-4 m'],
  ['x1', '0.7[mm]', '7E-4 m'],
  ['x2', '0.5[mm]', '5E-4 m'],
  ['x3', '0.3[mm]', '3E-4 m'],
  ['x4', '0.1[mm]', '1E-4 m'],
  ['x5', '0.1[mm]', '1E-4 m'],
  ['x6', '0.3[mm]', '3E-4 m'],
  ['x7', '0.5[mm]', '5E-4 m'],
  ['x8', '0.7[mm]', '7E-4 m'],
  ['t1', 'F/c1*(1-(1+(x1...', '-6.2216E-8 s'],
  ['t2', 'F/c1*(1-(1+(x2...', '-3.577E-8 s'],
];

const headCell = 'border-r border-b border-r-[#e3e3e8] border-b-[#c9c9cd] pt-1.5 text-left font-normal';
const bodyCell = 'border-r border-b border-[#b3b3b3] leading-5';

const ParameterTable = () => (
  <div className="border border-b-3 border-[#d4d4d8] bg-white">
    <div className="flex h-[413px]">
      <div className="flex-1 overflow-hidden">
        <table className="w-full table-fixed border-separate border-spacing-0">
          <colgroup><col className="w-[88px]" /><col className="w-[125px]" /><col className="w-[111px]" /><col /></colgroup>
          <thead>
            <tr className="h-[34px] bg-linear-to-b from-white from-40% to-[#f1f1f5]">
              <th className={`${headCell} relative pl-[22px]`}>
                <svg viewBox="0 0 12 8" className="absolute top-1 left-1.5 h-2 w-3"><path d="M0 0 L6 4 L0 8 Z M6 0 L12 4 L6 8 Z" fill="#444" /></svg>
                名称
              </th>
              <th className={`${headCell} pl-[5px]`}>表达式</th>
              <th className={`${headCell} pl-[5px]`}>值</th>
              <th className={`${headCell} pl-[7px]`}>描述</th>
            </tr>
          </thead>
          <tbody>
            {params.map(([name, expr, value], i) => (
              <tr key={name} className={`h-[23px] ${i % 2 ? 'bg-[#fbfbfe]' : 'bg-white'}`}>
                <td className={`${bodyCell} pl-1`}>{name}</td>
                <td className={`${bodyCell} overflow-hidden pl-1 whitespace-nowrap`}>{expr}</td>
                <td className={`${bodyCell} bg-[#eff0f0] pl-1`}>{value}</td>
                <td className={`${bodyCell} border-r-0`} />
              </tr>
            ))}
          </tbody>
        </table>
      </div>
      <div className="mt-[34px] flex w-[21px] flex-col bg-[#eff0f0]">
        <span className="flex h-[21px] items-center justify-center"><Chevron dir="up" /></span>
        <span className="h-[225px] bg-[#cdcdcd]" />
        <span className="mt-auto flex h-[21px] items-center justify-center"><Chevron dir="down" /></span>
      </div>
    </div>
    <div className="mr-[21px] flex h-[21px] bg-[#eff0f0]">
      <span className="flex w-[21px] items-center justify-center"><Chevron dir="left" /></span>
      <span className="w-[74%] bg-[#cdcdcd]" />
      <span className="ml-auto flex w-[21px] items-center justify-center"><Chevron dir="right" /></span>
    </div>
  </div>
);

const Field = ({ id, label }: { id: string; label: string }) => (
  <div className="shrink-0">
    <label htmlFor={id} className="block h-9 pt-2 leading-5">{label}</label>
    <input id={id} type="text" className="block h-6 w-full border-2 border-[#e6e6ea] bg-[#fbfbfe] px-1" />
  </div>
);

const Settings = () => (
  <section className="flex w-[480px] shrink-0 flex-col border border-[#d9d9de] bg-[#fbfbfe]">
    <div className="flex h-11 shrink-0 items-center justify-between pr-1.5 pl-2.5">
      <h2 className="text-[26px] leading-8 font-light text-[#24519a]">设置</h2>
      <div className="flex items-center gap-2 text-[#cdd3de]"><Caret className="border-t-[#cdd3de]" /><Pin /></div>
    </div>
    <p className="h-6 shrink-0 pl-2 text-lg leading-[22px] font-light text-[#24519a]">参数</p>
    <div className="flex min-h-0 flex-1">
      <div className="flex min-w-0 flex-1 flex-col overflow-hidden">
        <h3 className="mt-[15px] flex h-8 shrink-0 items-center bg-[#dee9f5] pl-[7px] text-[17px]"><Caret className="mr-[15px] border-t-[#3b3b3b]" />参数</h3>
        <div className="flex min-h-0 flex-1 flex-col pt-3 pr-2 pl-1.5">
          <ParameterTable />
          <div className="flex h-8 shrink-0 items-center pt-1 pl-[3px]">
            {['arrowUp', 'arrowDown', 'deleteRow', 'broom', 'folder', 'floppy', 'rename'].map((n) => (
              <button key={n} aria-label={n} className="flex w-[29px] justify-center"><Icon name={n} className="h-[18px] w-[18px]" /></button>
            ))}
            <Caret className="ml-1 border-t-[#85858a]" />
          </div>
          <Field id="param-name" label="名称:" />
          <Field id="param-expr" label="表达式:" />
          <Field id="param-desc" label="描述:" />
        </div>
      </div>
      <div className="mr-0.5 flex w-[21px] flex-col bg-[#eff0f0]">
        <span className="flex h-[21px] items-center justify-center"><Chevron dir="up" /></span>
        <span className="flex-1 bg-[#cdcdcd]" />
        <span className="flex h-11 items-end justify-center pb-1.5"><Chevron dir="down" /></span>
      </div>
    </div>
  </section>
);

/* ---------- graphics ---------- */

// Pressure samples every 12 px from the symmetry axis outwards, A is the peak level
const samples = [
  '33445556547874244225468A5388777',
  '2234568987654444413556896398787',
  '7777788887536875421467875498877',
  '8665655543356556643568865588877',
  '4455444455575542267688753599778',
  '1110112467655422389769953698788',
  '4444333433455412567976765798876',
  '8876676431023446766986485588766',
  '9998776531001268756986584 6A8765'.replace(' ', ''),
];

const levels = [0.06, 0.13, 0.23, 0.31, 0.39, 0.47, 0.55, 0.63, 0.74, 0.83, 0.97];

const jet = (t: number) =>
  [3, 2, 1].map((c) => Math.round(255 * Math.min(1, Math.max(0, 1.5 - Math.abs(4 * t - c)))));

const sampleAt = (r: number, c: number) => {
  const row = samples[Math.min(8, Math.max(0, r))];
  return levels[parseInt(row[Math.min(row.length - 1, Math.abs(c))], 16)];
};

const hash = (x: number, y: number) => {
  const s = Math.sin(x * 127.1 + y * 311.7) * 43758.5453;
  return s - Math.floor(s);
};

const noise = (x: number, y: number) => {
  const ix = Math.floor(x);
  const iy = Math.floor(y);
  const fx = x - ix;
  const fy = y - iy;
  const top = hash(ix, iy) * (1 - fx) + hash(ix + 1, iy) * fx;
  const bottom = hash(ix, iy + 1) * (1 - fx) + hash(ix + 1, iy + 1) * fx;
  return top * (1 - fy) + bottom * fy - 0.5;
};

// Catmull-Rom weights
const spline = (f: number) => [
  (-(f ** 3) + 2 * f ** 2 - f) / 2,
  (3 * f ** 3 - 5 * f ** 2 + 2) / 2,
  (-3 * f ** 3 + 4 * f ** 2 + f) / 2,
  (f ** 3 - f ** 2) / 2,
];

const pressure = (u: number, v: number) => {
  const wx = u + 9 * noise(u / 9, v / 7) + 5 * noise(u / 3, v / 3);
  const wy = v + 6 * noise(u / 8 + 40, v / 6) + 3 * noise(u / 3 + 9, v / 3);
  const c = Math.floor(wx / 12);
  const r = Math.floor(wy / 12);
  const cw = spline(wx / 12 - c);
  const rw = spline(wy / 12 - r);
  let sum = 0;
  for (let j = 0; j < 4; j++) for (let i = 0; i < 4; i++) sum += rw[j] * cw[i] * sampleAt(r + j - 1, c + i - 1);
  return sum + 0.05 * noise(u / 5, v / 4) + 0.03 * noise(u / 2, v / 2);
};

const FieldCanvas = ({ width, height, axis }: { width: number; height: number; axis: number }) => {
  const ref = useRef<HTMLCanvasElement>(null);
  useEffect(() => {
    const ctx = ref.current?.getContext('2d');
    if (!ctx) return;
    const img = ctx.createImageData(width, height);
    for (let y = 0; y < height; y++) {
      for (let x = 0; x < width; x++) {
        const [r, g, b] = jet(Math.min(0.97, Math.max(0.03, pressure(Math.abs(x - axis), y))));
        img.data.set([r, g, b, 255], (y * width + x) * 4);
      }
    }
    ctx.putImageData(img, 0, 0);
  }, [width, height, axis]);
  return <canvas ref={ref} width={width} height={height} className="block" />;
};

const xTicks = ['5', '6', '7', '8', '9', '10', ''];
const yTicks = ['3.5', '3', '2.5', '2', '1.5', '1', '0.5', '0', '-0.5'];
const barTicks = ['0.4', '0.3', '0.2', '0.1', '0', '-0.1', '-0.2', '-0.3', '-0.4'];
const elements = ['#9dff5f', '#8dff70', '#50ffad', '#00f0ff', '#00e8ff', '#50ffad', '#8dff70', '#aaff55'];
const bands = 24;

const Plot = () => (
  <svg viewBox="0 0 852 534" className="min-h-0 w-full flex-1 bg-white font-['DejaVu_Sans','Noto_Sans_CJK_SC',sans-serif] text-[15px]" fill="#1a1a1a">
    <text x="395" y="32" textAnchor="middle" xmlSpace="preserve">时间=6.9E-7 s   表面: 总声压场 (Pa)</text>
    <text x="1" y="49" className="text-[14px]">mm</text>
    <svg x="819" y="6" width="26" height="26" viewBox="0 0 20 20">{appLogo}</svg>

    <foreignObject x="56" y="202" width="682" height="98"><FieldCanvas width={682} height={98} axis={326} /></foreignObject>
    <path d="M56 202 H738 M56 299.5 H738" stroke="#222" strokeWidth="1.2" />
    {elements.map((c, i) => (
      <rect key={i} x={307 + i * 19.5} y="192.5" width="15" height="9.5" fill={c} stroke="#222" strokeWidth="1.2" />
    ))}
    <circle cx="382.5" cy="250.5" r="10" fill="#fff" stroke="#000" strokeWidth="1.2" />

    <rect x="56.5" y="43" width="681" height="466" fill="none" stroke="#7f7f7f" strokeWidth="1.6" />
    {xTicks.map((t, i) => {
      const x = 128 + i * 97.85;
      return (
        <g key={i}>
          <path d={`M${x} 43 v7 M${x} 509 v-7`} stroke="#7f7f7f" strokeWidth="1.6" />
          <text x={x} y="529" textAnchor="middle">{t}</text>
        </g>
      );
    })}
    <text x="713" y="529" className="text-[14px]">mm</text>
    {yTicks.map((t, i) => {
      const y = 75 + i * 48.85;
      return (
        <g key={t}>
          <path d={`M56 ${y} h7 M738 ${y} h-7`} stroke="#7f7f7f" strokeWidth="1.6" />
          <text x="51" y={y + 5} textAnchor="end">{t}</text>
        </g>
      );
    })}

    {Array.from({ length: bands }, (_, i) => (
      <rect key={i} x="764.5" y={81 + (i * 421) / bands} width="19" height={421 / bands + 0.5} fill={`rgb(${jet(0.97 - (i * 0.94) / (bands - 1)).join(',')})`} />
    ))}
    <rect x="764.5" y="81" width="19" height="421" fill="none" stroke="#222" />
    {barTicks.map((t, i) => (
      <g key={t}>
        <path d={`M765 ${90 + i * 50.7} h3 M783 ${90 + i * 50.7} h-3`} stroke="#222" strokeWidth="1.4" />
        <text x="792" y={95 + i * 50.7}>{t}</text>
      </g>
    ))}
  </svg>
);

const Tab = ({ label, active, width }: { label: string; active?: boolean; width: string }) => (
  <button
    role="tab"
    aria-selected={!!active}
    className={`text-[17px] whitespace-nowrap ${width} ${active ? '-mb-px h-8 border border-b-0 border-[#d4d4d9] bg-[#fbfbfe] text-[#24519a]' : 'h-[31px] bg-[#ebebeb]'}`}
  >
    {label}
  </button>
);

const ToolButton = ({ icon, width = 'w-[29px]', on }: { icon: string; width?: string; on?: boolean }) => (
  <button aria-label={icon} aria-pressed={on} className={`flex h-[22px] shrink-0 items-center justify-center ${width}`}>
    <span className={on ? 'rounded-sm border border-[#2a5f9e] bg-linear-to-b from-[#6fa3d8] to-[#dcebf8]' : ''}><Icon name={icon} /></span>
  </button>
);

const Divider = ({ className }: { className: string }) => <span className={`h-5 w-px bg-[#cfcfd4] ${className}`} />;

const Graphics = () => (
  <section className="flex min-h-0 flex-1 flex-col border border-[#d9d9de] bg-[#fbfbfe]">
    <div role="tablist" className="flex h-[38px] shrink-0 items-end gap-2.5 border-b border-[#d4d4d9] pl-1">
      <Tab label="图形" active width="w-[47px]" />
      <Tab label="探针图 1" width="w-[76px]" />
      <div className="mr-1.5 mb-1 ml-auto flex items-center gap-2 text-[#cdd3de]"><Caret className="border-t-[#cdd3de]" /><Pin /></div>
    </div>
    <div className="flex h-[35px] shrink-0 items-center pt-0.5 pl-0.5">
      {['zoomIn', 'zoomOut', 'zoomBox', 'zoomExtents'].map((n) => <ToolButton key={n} icon={n} />)}
      <Divider className="mr-3 ml-1.5" />
      <ToolButton icon="axes" />
      <Caret className="mr-3 ml-0.5" />
      <ToolButton icon="gridToggle" on />
      <Divider className="mr-2.5 ml-2" />
      <ToolButton icon="camera" />
      <ToolButton icon="printer" />
    </div>
    <Plot />
  </section>
);

const ProbeTable = () => (
  <section className="shrink-0 border border-[#d9d9de] bg-[#fbfbfe] pt-1.5">
    <div role="tablist" className="flex h-8 items-end gap-2.5 border-b border-[#d4d4d9] pl-1">
      <Tab label="消息" width="w-11" />
      <Tab label="进度" width="w-11" />
      <Tab label="日志" width="w-11" />
      <Tab label="探针表 1" active width="w-[78px]" />
      <div className="mr-1 mb-1 ml-auto flex items-center gap-2 text-[#cdd3de]">
        <Caret className="border-t-[#cdd3de]" />
        <Pin />
        <svg viewBox="0 0 12 12" className="h-3 w-3"><path d="M1 1 L11 11 M11 1 L1 11" stroke="currentColor" strokeWidth="1.8" /></svg>
      </div>
    </div>
    <div className="flex h-[38px] items-center pl-1.5">
      <ToolButton icon="precision" />
      <Divider className="mr-3 ml-2" />
      <ToolButton icon="derived" />
      <ToolButton icon="auto" on />
      <ToolButton icon="eng1" />
      <ToolButton icon="eng2" />
      <ToolButton icon="decimal" />
      <Divider className="mr-2.5 ml-2" />
      {['broom', 'trashBlue', 'tableGraph', 'pinkSquare', 'copyTable', 'exportTable', 'table'].map((n) => <ToolButton key={n} icon={n} />)}
      <Caret className="ml-1" />
    </div>
    <div className="mr-3 mb-[10px] ml-2.5 h-[65px] overflow-hidden border border-[#d0d0d5] bg-white">
      <table className="w-full table-fixed border-separate border-spacing-0">
        <colgroup><col className="w-[85px]" /><col className="w-[184px]" /><col /><col className="w-[21px]" /></colgroup>
        <thead>
          <tr className="h-[34px] bg-linear-to-b from-white from-40% to-[#f1f1f5]">
            <th className={`${headCell} pl-1.5`}>时间 (s)</th>
            <th className={`${headCell} pl-1.5 whitespace-nowrap`}>总声压场 (Pa), 边界探针 1</th>
            <th className={headCell} />
            <th className="bg-[#fbfbfe]" />
          </tr>
        </thead>
        <tbody>
          {[['0.0000', '0.0012793'], ['', '']].map(([t, p], i) => (
            <tr key={i} className="h-[23px]">
              <td className={`${bodyCell} pl-px`}>{t}</td>
              <td className={`${bodyCell} pl-px`}>{p}</td>
              <td className={`${bodyCell} border-r-0`} />
              <td className="bg-[#eff0f0]" />
            </tr>
          ))}
        </tbody>
      </table>
    </div>
  </section>
);

const App: React.FC = () => {
  return (
    <div className="relative h-screen overflow-hidden font-['Noto_Sans','Noto_Sans_CJK_SC',sans-serif] text-[15px] text-black">
      <div className="flex h-full flex-col border-x-4 border-y border-[#646261] bg-[#fbfbfe]">
        <TitleBar />
        <RibbonTabs />
        <Ribbon />
        <main className="flex min-h-0 flex-1 gap-1.5 px-[9px] py-[5px]">
          <ModelBuilder />
          <Settings />
          <div className="flex min-w-0 flex-1 flex-col gap-[7px]">
            <Graphics />
            <ProbeTable />
          </div>
        </main>
        <footer className="flex h-10 shrink-0 items-center bg-[#f0eded]">
          <span className="ml-[51%]">1.29 GB | 1.45 GB</span>
        </footer>
      </div>
      <div role="tooltip" className="absolute bottom-[78px] left-0 flex h-[25px] w-[94px] items-center border-2 border-l-0 border-black bg-[#ffffe1] font-['Liberation_Mono','Noto_Sans_CJK_SC',monospace] text-[13px] leading-5">
        <span className="-ml-0.5">×11.69</span><span className="text-[15px]">英寸</span>
      </div>
    </div>
  );
};

export default App;
